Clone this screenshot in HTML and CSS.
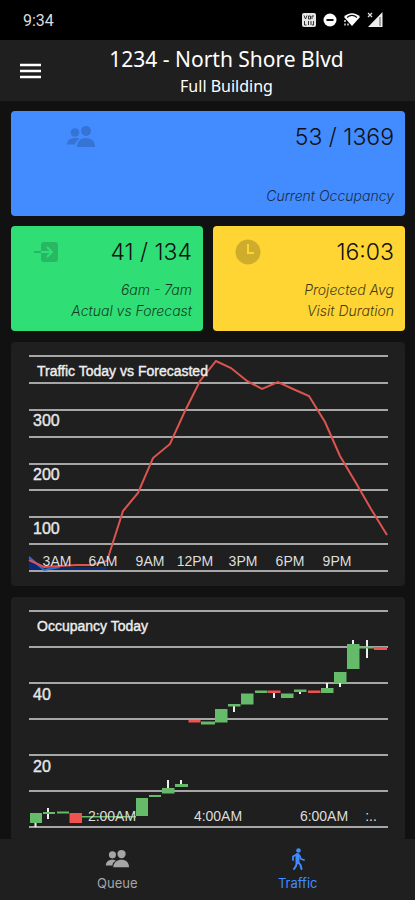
FILE: index.html
```
<!DOCTYPE html>
<html lang="en">
  <head>
    <meta charset="UTF-8" />
    <meta name="viewport" content="width=device-width, initial-scale=1.0" />
    <title>Traffic</title>
    <link rel="stylesheet" href="styles.css">
  </head>

  <body>
    <div class="status-bar">
      <span class="time">9:34</span>
      <div class="status-icons">
        <svg width="16" height="16" viewBox="0 0 16 16">
          <rect x="1" y="1" width="14" height="14" rx="2" fill="#e6e6e6" />
          <path d="M3 3.500l1.500 3.500l1.500-3.500M7.500 4h2v3h-2zM11 7V4h2M3.500 9v4h2M7.500 9v4M10 9v4M12.500 9v4h-1.500" fill="none" stroke="#333" stroke-width="1" />
        </svg>
        <svg width="14" height="14" viewBox="0 0 14 14">
          <circle cx="7" cy="7" r="6.500" fill="#fff" />
          <rect x="3.500" y="6" width="7" height="2" fill="#111" />
        </svg>
        <svg width="18" height="16" viewBox="0 0 18 16">
          <path d="M1 5C5 0 13 0 17 5L9 14Z" fill="#fff" />
          <path d="M4 5.500C7 3 11 3 14 5.500" fill="none" stroke="#111" stroke-width="1.200" />
          <path d="M2 8v2M2 11.500v2M5 11.500v2" stroke="#ddd" stroke-width="1.500" />
        </svg>
        <svg width="16" height="16" viewBox="0 0 16 16">
          <path d="M15.500 0V15H1Z" fill="#eee" />
          <path d="M13 5v9" stroke="#555" stroke-width="1" />
          <path d="M1 1l4 4M5 1L1 5" stroke="#ddd" stroke-width="1.300" />
        </svg>
      </div>
    </div>

    <header class="header">
      <button class="menu-button" type="button" aria-label="Menu">
        <svg width="22" height="16" viewBox="0 0 22 16">
          <path d="M0 2h21M0 8h21M0 14h21" stroke="#fff" stroke-width="2.400" />
        </svg>
      </button>
      <div class="header-title">
        <h1>1234 - North Shore Blvd</h1>
        <p>Full Building</p>
      </div>
    </header>

    <main class="content">
      <div class="stats">
        <section class="stat-card blue">
          <svg class="stat-icon" width="30" height="24" viewBox="0 0 30 24">
            <circle cx="8" cy="7.500" r="4.300" />
            <path d="M0 19.500c0-4.500 4-6.500 8-6.500 2 0 3.500.3 4.500 1-2.500 1.500-4 3-4.500 5.500z" />
            <circle cx="19" cy="6" r="5" />
            <path d="M10 22c0-6 4-9 9-9s9 3 9 9z" />
          </svg>
          <p class="stat-value">53 / 1369</p>
          <p class="stat-label">Current Occupancy</p>
        </section>
        <section class="stat-card green">
          <svg class="stat-icon" width="24" height="24" viewBox="0 0 24 24">
            <rect x="7" y="2" width="17" height="20" rx="3" />
            <path d="M0 12h7" stroke="#28b863" stroke-width="2" />
            <path d="M7 12h11M13 7l5 5l-5 5" fill="none" stroke="#2fdf75" stroke-width="2" />
          </svg>
          <p class="stat-value">41 / 134</p>
          <p class="stat-label">6am - 7am<br>Actual vs Forecast</p>
        </section>
        <section class="stat-card yellow">
          <svg class="stat-icon" width="26" height="26" viewBox="0 0 26 26">
            <circle cx="13" cy="13" r="12.500" />
            <path d="M13 5v9h6" fill="none" stroke="#ffd534" stroke-width="2" />
          </svg>
          <p class="stat-value">16:03</p>
          <p class="stat-label">Projected Avg<br>Visit Duration</p>
        </section>
      </div>

      <!-- Traffic line chart -->
      <section class="chart-card">
        <svg class="chart" viewBox="0 0 394 244" role="img" aria-label="Traffic Today vs Forecasted">
          <path class="grid" d="M18 14H377M18 41H377M18 68H377M18 95H377M18 122H377M18 148H377M18 175H377M18 202H377M18 229H377" />
          <path d="M18 215L33 227L49 225L96 225V228H18Z" fill="#0a2a78" />
          <path d="M18 215L33 228L49 225" fill="none" stroke="#2a6ad8" stroke-width="2" />
          <polyline class="forecast" points="18,218 33,225 49,224 65,223 80,223 96,219 112,169 127,151 142,116 159,102 174,69 189,39 205,19 220,26 236,39 251,47 267,40 282,47 298,54 314,80 329,114 345,141 360,167 376,193" />
          <g class="axis-label">
            <text x="46" y="224">3AM</text>
            <text x="92" y="224">6AM</text>
            <text x="139" y="224">9AM</text>
            <text x="184" y="224">12PM</text>
            <text x="232" y="224">3PM</text>
            <text x="279" y="224">6PM</text>
            <text x="326" y="224">9PM</text>
          </g>
          <g class="value-label">
            <text x="22" y="84">300</text>
            <text x="22" y="138">200</text>
            <text x="22" y="192">100</text>
          </g>
          <text class="chart-title" x="26" y="34">Traffic Today vs Forecasted</text>
        </svg>
      </section>

      <!-- Occupancy candlestick chart -->
      <section class="chart-card">
        <svg class="chart" viewBox="0 0 394 244" role="img" aria-label="Occupancy Today">
          <path class="grid" d="M18 14H377M18 50H377M18 86H377M18 122H377M18 158H377M18 194H377M18 230H377" />
          <path class="wick" d="M24.500 225V230M37 211V222M157 183V192M170 183V188M223 109V115M263 95V101M289 94V97M316 86V92M329 85V90M342 43V48M356 43V61" />
          <g class="up">
            <rect x="19" y="216" width="12" height="10" />
            <rect x="32" y="215" width="12" height="2" />
            <rect x="46" y="214.500" width="12" height="2" />
            <rect x="71" y="219" width="54" height="1.500" />
            <rect x="125" y="201" width="12" height="18" />
            <rect x="138" y="198" width="12" height="2" />
            <rect x="151" y="191" width="12.500" height="5.500" />
            <rect x="164" y="187" width="13" height="3" />
            <rect x="190" y="124.500" width="14" height="3" />
            <rect x="204" y="112" width="12.500" height="13.500" />
            <rect x="217" y="107" width="12.500" height="2.500" />
            <rect x="230" y="96.500" width="12.500" height="11" />
            <rect x="244" y="93.500" width="12.500" height="2.500" />
            <rect x="270" y="96.500" width="12.500" height="4.500" />
            <rect x="283" y="92.500" width="12.500" height="2.500" />
            <rect x="310" y="91" width="12.500" height="5" />
            <rect x="323" y="75" width="12.500" height="11" />
            <rect x="336" y="47" width="12.500" height="25" />
            <rect x="348" y="49.500" width="15" height="2" />
          </g>
          <g class="down">
            <rect x="58.500" y="216" width="12.500" height="10" />
            <rect x="177.500" y="123" width="12" height="2.500" />
            <rect x="257" y="93.500" width="12.500" height="2.500" />
            <rect x="297" y="93.500" width="12.500" height="2.500" />
            <rect x="363" y="50" width="13" height="3" />
          </g>
          <g class="axis-label">
            <text x="101" y="224">2:00AM</text>
            <text x="207" y="224">4:00AM</text>
            <text x="313" y="224">6:00AM</text>
            <text x="360" y="224">:..</text>
          </g>
          <g class="value-label">
            <text x="22" y="103">40</text>
            <text x="22" y="175">20</text>
          </g>
          <text class="chart-title" x="26" y="34">Occupancy Today</text>
        </svg>
      </section>
    </main>

    <nav class="tabs">
      <a href="#queue" class="tab">
        <svg width="24" height="20" viewBox="0 0 29 24" fill="currentColor">
          <circle cx="9" cy="7" r="4.300" />
          <path d="M1 20c0-5 4-7 8-7 2 0 3 .3 4 1-2.500 1.500-4 3-4 6z" />
          <circle cx="20" cy="6" r="5" />
          <path d="M10 22c0-6 5-9 10-9s9 3 9 9z" />
        </svg>
        <span>Queue</span>
      </a>
      <a href="#traffic" class="tab active">
        <svg width="24" height="22" viewBox="0 0 24 22" fill="none" stroke="currentColor" stroke-linecap="round" stroke-linejoin="round">
          <circle cx="12.500" cy="2.500" r="2.300" fill="currentColor" stroke="none" />
          <path d="M11.500 7v7" stroke-width="4" />
          <path d="M10.500 6.500L7 8.500V12M13.500 7.500L15 11L18 12" stroke-width="1.800" />
          <path d="M11 14l-1 4l-2 3M12.500 14.500l2 2.500l1 4" stroke-width="2" />
        </svg>
        <span>Traffic</span>
      </a>
    </nav>
  </body>
</html>
```

FILE: styles.css
```
* {
  box-sizing: border-box;
}

body {
  margin: 0;
  height: 100vh;
  display: flex;
  flex-direction: column;
  background-color: #111;
  color: #fff;
  font-family: Inter, "Liberation Sans", sans-serif;
}

h1,
p {
  margin: 0;
}

.status-bar {
  display: flex;
  justify-content: space-between;
  align-items: center;
  height: 40px;
  padding: 0 32px 0 23px;
  background-color: #000;
}

.time {
  font-family: Roboto, sans-serif;
  font-size: 16px;
  color: #ddd;
}

.status-icons {
  display: flex;
  align-items: center;
  gap: 6px;
}

.header {
  display: flex;
  align-items: center;
  height: 61px;
  padding: 0 4px 0 20px;
  background-color: #1f1f1f;
}

.menu-button {
  display: flex;
  padding: 0;
  border: none;
  background: none;
  cursor: pointer;
}

.header-title {
  flex: 1;
  text-align: center;
  font-family: "Noto Sans", sans-serif;
}

.header-title h1 {
  font-size: 21px;
  font-weight: 400;
  line-height: 30px;
}

.header-title p {
  font-size: 16px;
  line-height: 24px;
}

.content {
  flex: 1;
  min-height: 0;
  overflow-y: auto;
  scrollbar-width: none;
  display: flex;
  flex-direction: column;
  gap: 11px;
  padding: 10px 10px 10px 11px;
}

.stats {
  display: grid;
  grid-template-columns: 1fr 1fr;
  gap: 10px;
}

.stat-card {
  display: grid;
  grid-template-columns: 36% 1fr;
  grid-template-rows: auto 1fr;
  min-height: 105px;
  padding: 9px 0 10px;
  border-radius: 4px;
  color: #111;
}

.stat-card.blue {
  grid-column: 1 / 3;
  background-color: #428cff;
  fill: #3573d4;
}

.stat-card.green {
  background-color: #2fdf75;
  fill: #28b863;
}

.stat-card.yellow {
  background-color: #ffd534;
  fill: #cfad2c;
}

.stat-icon {
  justify-self: center;
  align-self: center;
}

.stat-value {
  padding-right: 11px;
  text-align: right;
  font-size: 23px;
  font-weight: 300;
  line-height: 34px;
}

.stat-label {
  grid-column: 1 / 3;
  align-self: end;
  padding-right: 11px;
  text-align: right;
  font-size: 14px;
  font-style: italic;
  font-weight: 300;
  line-height: 21px;
  opacity: 0.8;
}

.chart-card {
  flex-shrink: 0;
  background-color: #1f1f1f;
  border-radius: 4px;
}

.chart {
  display: block;
  width: 100%;
  font-family: "Liberation Sans", Arial, sans-serif;
}

.grid {
  stroke: #a6a6a6;
  stroke-width: 2;
}

.axis-label {
  fill: #ddd;
  font-size: 14px;
  text-anchor: middle;
}

.value-label {
  fill: #e6e6e6;
  stroke: #e6e6e6;
  stroke-width: 0.4;
  font-size: 16px;
}

.chart-title {
  fill: #eee;
  stroke: #eee;
  stroke-width: 0.4;
  font-size: 14px;
}

.forecast {
  fill: none;
  stroke: #dc5450;
  stroke-width: 2;
}

.wick {
  stroke: #eee;
  stroke-width: 2;
}

.up {
  fill: #66bb6a;
}

.down {
  fill: #ef5350;
}

.tabs {
  display: flex;
  height: 61px;
  padding: 0 27px;
  background-color: #1f1f1f;
}

.tab {
  flex: 1;
  display: flex;
  flex-direction: column;
  align-items: center;
  justify-content: center;
  gap: 4px;
  color: #a6a6a6;
  font-size: 13px;
  line-height: 18px;
  text-decoration: none;
}

.tab svg {
  height: 22px;
}

.tab.active {
  color: #428cff;
}
```
